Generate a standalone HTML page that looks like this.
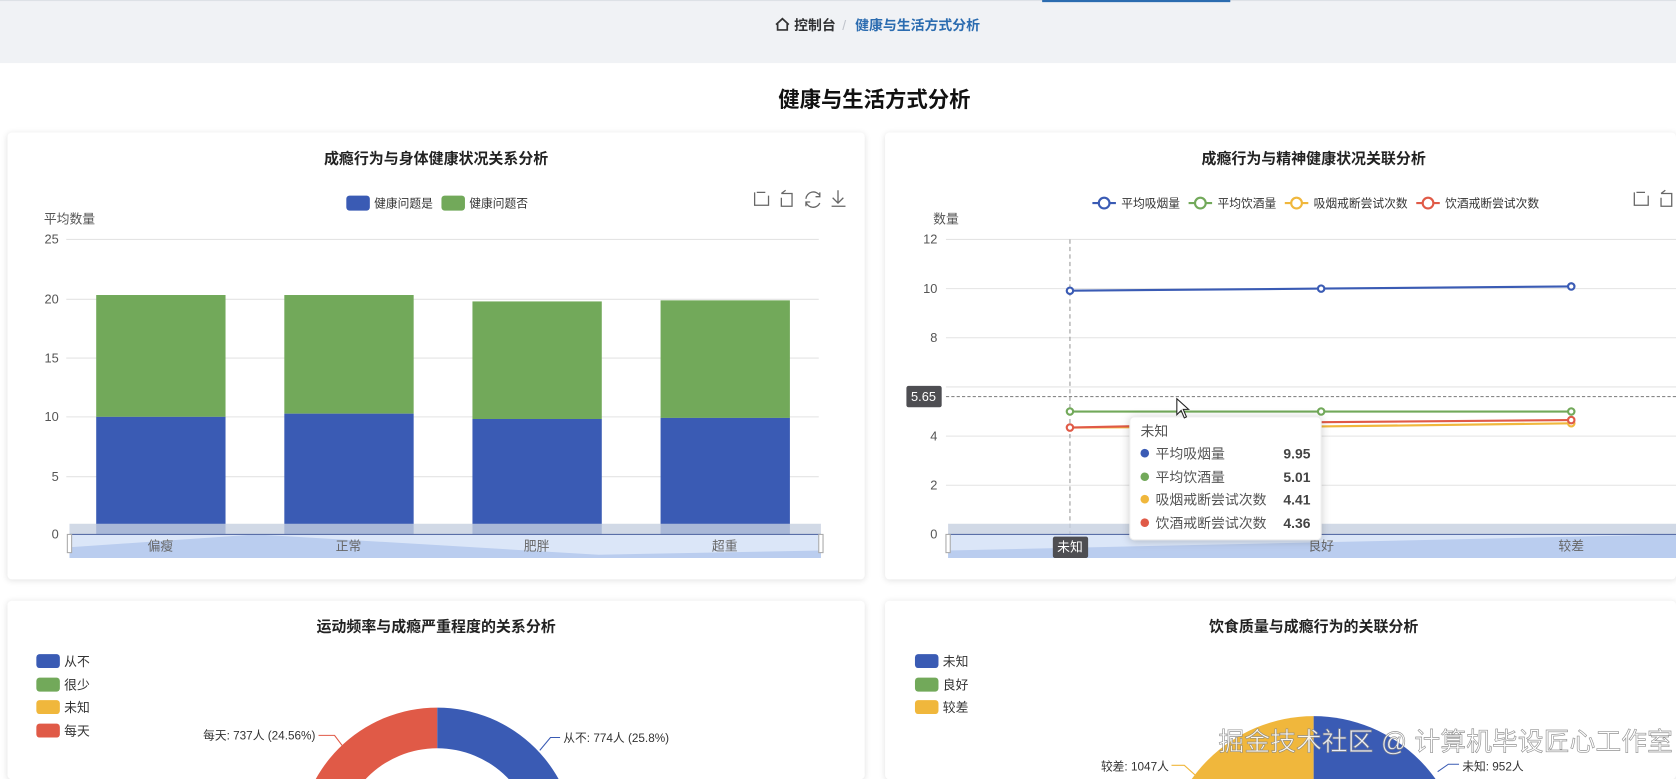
<!DOCTYPE html>
<html><head><meta charset="utf-8"><style>
html,body{margin:0;padding:0;width:1676px;height:779px;overflow:hidden;background:#fff;font-family:"Liberation Sans","Noto Sans CJK SC",sans-serif}
#w{position:absolute;left:0;top:0;width:1568px;height:729px;transform:scale(1.06888);transform-origin:0 0;overflow:hidden;background:#fff}
.hdr{position:absolute;left:0;top:0;width:1568px;height:58px;background:#f0f2f5;border-top:1px solid #dde1e6}
.card{position:absolute;background:#fff;border-radius:4px;box-shadow:0 1px 6px rgba(0,0,0,0.12)}
svg text{font-family:"Liberation Sans","Noto Sans CJK SC",sans-serif}
</style></head><body><div id="w">
<div class="hdr"></div>
<div style="position:absolute;left:975px;top:0;width:176px;height:2px;background:#2b6cb0"></div>
<div class="card" style="left:7px;top:124px;width:802px;height:418px"></div>
<div class="card" style="left:828px;top:124px;width:740px;height:418px"></div>
<div class="card" style="left:7px;top:562px;width:802px;height:167px"></div>
<div class="card" style="left:828px;top:562px;width:740px;height:167px"></div>
<svg width="1568" height="729" style="position:absolute;left:0;top:0" font-size="12">
<path d="M726,23 L732,17.5 L738,23 M727.5,22 V28 H736.5 V22" fill="none" stroke="#333" stroke-width="1.6"/>
<text x="743" y="28" font-size="13" font-weight="bold" fill="#303133">控制台</text>
<text x="788" y="28" font-size="13" fill="#c0c4cc">/</text>
<text x="800" y="28" font-size="13" font-weight="bold" fill="#2b6cb0">健康与生活方式分析</text>
<text x="818" y="100" font-size="20" font-weight="bold" fill="#111" text-anchor="middle">健康与生活方式分析</text>
<!-- chart1 -->
<text x="408" y="153" font-size="14" font-weight="bold" fill="#222" text-anchor="middle">成瘾行为与身体健康状况关系分析</text>
<rect x="324" y="183" width="22" height="14" rx="3" fill="#3a5bb4"/><text x="350" y="194" font-size="11" fill="#333">健康问题是</text>
<rect x="413" y="183" width="22" height="14" rx="3" fill="#72a95a"/><text x="439" y="194" font-size="11" fill="#333">健康问题否</text>
<g fill="none" stroke="#666" stroke-width="1.2">
<path d="M706,180 V192 H719 V183 M708,180 H716"/><path d="M731,181 H741 V193 H731 V185 M731,181 L735,178"/>
<path d="M767,183 A7,7 0 0 0 754,186 M754,189 A7,7 0 0 0 767,190 M767,180 V184 H763 M754,193 V189 H758"/>
<path d="M784,178 V190 M779,185 L784,190 L789,185 M778,193 H791"/></g>
<text x="41" y="209" fill="#555">平均数量</text>
<g stroke="#e4e4e4"><path d="M62,224H766M62,280H766M62,335H766M62,390H766M62,446H766"/></g>
<g fill="#555" text-anchor="end"><text x="55" y="228">25</text><text x="55" y="284">20</text><text x="55" y="339">15</text><text x="55" y="394">10</text><text x="55" y="450">5</text><text x="55" y="504">0</text></g>
<g fill="#72a95a"><rect x="90" y="276" width="121" height="114"/><rect x="266" y="276" width="121" height="111"/><rect x="442" y="282" width="121" height="110"/><rect x="618" y="281" width="121" height="110"/></g>
<g fill="#3a5bb4"><rect x="90" y="390" width="121" height="110"/><rect x="266" y="387" width="121" height="113"/><rect x="442" y="392" width="121" height="108"/><rect x="618" y="391" width="121" height="109"/></g>
<rect x="65" y="490" width="703" height="10" fill="#c5cfe0" opacity="0.8"/>
<rect x="65" y="500" width="703" height="22" fill="#dbe6f8"/>
<path d="M65,512 L240,500 L410,510 L560,519 L768,515 V522 H65Z" fill="#bacdef"/>
<path d="M65,500H768" stroke="#5a6fa8"/><rect x="63" y="500" width="4" height="17" fill="#fff" stroke="#aaa"/><rect x="766" y="500" width="4" height="17" fill="#fff" stroke="#aaa"/>
<g fill="#666" text-anchor="middle"><text x="150" y="515">偏瘦</text><text x="326" y="515">正常</text><text x="502" y="515">肥胖</text><text x="678" y="515">超重</text></g>
<!-- chart2 -->
<text x="1229" y="153" font-size="14" font-weight="bold" fill="#222" text-anchor="middle">成瘾行为与精神健康状况关联分析</text>
<g fill="#fff" stroke-width="2">
<path d="M1022,190H1044" stroke="#3a5bb4"/><circle cx="1033" cy="190" r="5" stroke="#3a5bb4"/>
<path d="M1112,190H1134" stroke="#72a95a"/><circle cx="1123" cy="190" r="5" stroke="#72a95a"/>
<path d="M1202,190H1224" stroke="#f0b73c"/><circle cx="1213" cy="190" r="5" stroke="#f0b73c"/>
<path d="M1325,190H1347" stroke="#e05a47"/><circle cx="1336" cy="190" r="5" stroke="#e05a47"/></g>
<g fill="#333" font-size="11"><text x="1049" y="194">平均吸烟量</text><text x="1139" y="194">平均饮酒量</text><text x="1229" y="194">吸烟戒断尝试次数</text><text x="1352" y="194">饮酒戒断尝试次数</text></g>
<g fill="none" stroke="#666" stroke-width="1.2"><path d="M1529,180 V192 H1542 V183 M1531,180 H1539"/><path d="M1554,181 H1564 V193 H1554 V185 M1554,181 L1558,178"/></g>
<text x="873" y="209" fill="#555">数量</text>
<g stroke="#e4e4e4"><path d="M885,224H1568M885,270H1568M885,316H1568M885,362H1568M885,408H1568M885,454H1568"/></g>
<g fill="#555" text-anchor="end"><text x="877" y="228">12</text><text x="877" y="274">10</text><text x="877" y="320">8</text><text x="877" y="412">4</text><text x="877" y="458">2</text><text x="877" y="504">0</text></g>
<path d="M1001,224V500" stroke="#999" stroke-dasharray="4,3"/>
<path d="M885,371H1568" stroke="#888" stroke-dasharray="3,2"/>
<g fill="#fff" stroke-width="2">
<path d="M1001,272L1236,270L1470,268" fill="none" stroke="#3a5bb4"/><circle cx="1001" cy="272" r="3" stroke="#3a5bb4"/><circle cx="1236" cy="270" r="3" stroke="#3a5bb4"/><circle cx="1470" cy="268" r="3" stroke="#3a5bb4"/>
<path d="M1001,385H1470" fill="none" stroke="#72a95a"/><circle cx="1001" cy="385" r="3" stroke="#72a95a"/><circle cx="1236" cy="385" r="3" stroke="#72a95a"/><circle cx="1470" cy="385" r="3" stroke="#72a95a"/>
<path d="M1001,400L1236,399L1470,396" fill="none" stroke="#f0b73c"/><circle cx="1470" cy="396" r="3" stroke="#f0b73c"/>
<path d="M1001,400L1236,395L1470,393" fill="none" stroke="#e05a47"/><circle cx="1001" cy="400" r="3" stroke="#e05a47"/><circle cx="1470" cy="393" r="3" stroke="#e05a47"/></g>
<rect x="887" y="490" width="681" height="10" fill="#c5cfe0" opacity="0.8"/>
<rect x="887" y="500" width="681" height="22" fill="#dbe6f8"/>
<path d="M887,515 L1568,500 V522 H887Z" fill="#bacdef"/>
<path d="M887,500H1568" stroke="#5a6fa8"/><rect x="885" y="500" width="4" height="17" fill="#fff" stroke="#aaa"/>
<g fill="#666" text-anchor="middle"><text x="1236" y="515">良好</text><text x="1470" y="515">较差</text></g>
<rect x="985" y="502" width="33" height="20" rx="2" fill="#4e4e52"/><text x="1001" y="516" fill="#fff" text-anchor="middle">未知</text>
<rect x="848" y="361" width="33" height="20" rx="2" fill="#4e4e52"/><text x="864" y="375" fill="#fff" text-anchor="middle">5.65</text>
<rect x="1057" y="390" width="179" height="115" rx="4" fill="#fff" stroke="#eee" style="filter:drop-shadow(0 1px 4px rgba(0,0,0,0.2))"/>
<text x="1067" y="408" font-size="13" fill="#555">未知</text>
<g font-size="13"><circle cx="1071" cy="424" r="4" fill="#3a5bb4"/><text x="1081" y="429" fill="#555">平均吸烟量</text><text x="1226" y="429" fill="#444" font-weight="bold" text-anchor="end">9.95</text>
<circle cx="1071" cy="446" r="4" fill="#72a95a"/><text x="1081" y="451" fill="#555">平均饮酒量</text><text x="1226" y="451" fill="#444" font-weight="bold" text-anchor="end">5.01</text>
<circle cx="1071" cy="467" r="4" fill="#f0b73c"/><text x="1081" y="472" fill="#555">吸烟戒断尝试次数</text><text x="1226" y="472" fill="#444" font-weight="bold" text-anchor="end">4.41</text>
<circle cx="1071" cy="489" r="4" fill="#e05a47"/><text x="1081" y="494" fill="#555">饮酒戒断尝试次数</text><text x="1226" y="494" fill="#444" font-weight="bold" text-anchor="end">4.36</text></g>
<path d="M1101,373 V388 L1105,384 L1108,391 L1110,390 L1107,383 L1112,383Z" fill="#fff" stroke="#222"/>
<!-- chart3 -->
<text x="408" y="591" font-size="14" font-weight="bold" fill="#222" text-anchor="middle">运动频率与成瘾严重程度的关系分析</text>
<rect x="34" y="612" width="22" height="13" rx="3" fill="#3a5bb4"/><text x="60" y="623" fill="#333">从不</text>
<rect x="34" y="634" width="22" height="13" rx="3" fill="#72a95a"/><text x="60" y="645" fill="#333">很少</text>
<rect x="34" y="655" width="22" height="13" rx="3" fill="#f0b73c"/><text x="60" y="666" fill="#333">未知</text>
<rect x="34" y="677" width="22" height="13" rx="3" fill="#e05a47"/><text x="60" y="688" fill="#333">每天</text>
<path d="M409,662 A130,130 0 0 1 539,792 L501,792 A92,92 0 0 0 409,700 Z" fill="#3a5bb4"/>
<path d="M279,792 A130,130 0 0 1 409,662 L409,700 A92,92 0 0 0 317,792 Z" fill="#e05a47"/>
<path d="M298,688 H313 L322,700" fill="none" stroke="#e05a47"/><text x="190" y="692" font-size="11" fill="#333">每天: 737人 (24.56%)</text>
<path d="M524,690 H515 L505,702" fill="none" stroke="#3a5bb4"/><text x="527" y="694" font-size="11" fill="#333">从不: 774人 (25.8%)</text>
<!-- chart4 -->
<text x="1229" y="591" font-size="14" font-weight="bold" fill="#222" text-anchor="middle">饮食质量与成瘾行为的关联分析</text>
<rect x="856" y="612" width="22" height="13" rx="3" fill="#3a5bb4"/><text x="882" y="623" fill="#333">未知</text>
<rect x="856" y="634" width="22" height="13" rx="3" fill="#72a95a"/><text x="882" y="645" fill="#333">良好</text>
<rect x="856" y="655" width="22" height="13" rx="3" fill="#f0b73c"/><text x="882" y="666" fill="#333">较差</text>
<path d="M1089,810 A140,140 0 0 1 1229,670 L1229,810Z" fill="#f0b73c"/>
<path d="M1229,670 A140,140 0 0 1 1369,810 L1229,810Z" fill="#3a5bb4"/>
<path d="M1096,716 H1108 L1118,725" fill="none" stroke="#f0b73c"/><text x="1030" y="721" font-size="11" fill="#333">较差: 1047人</text>
<path d="M1365,715 H1355 L1345,722" fill="none" stroke="#3a5bb4"/><text x="1368" y="721" font-size="11" fill="#333">未知: 952人</text>
<text x="1140" y="702" font-size="24" fill="#fff" stroke="#888" stroke-width="0.6" opacity="0.9" textLength="425">掘金技术社区 @ 计算机毕设匠心工作室</text>
</svg>
</div></body></html>
